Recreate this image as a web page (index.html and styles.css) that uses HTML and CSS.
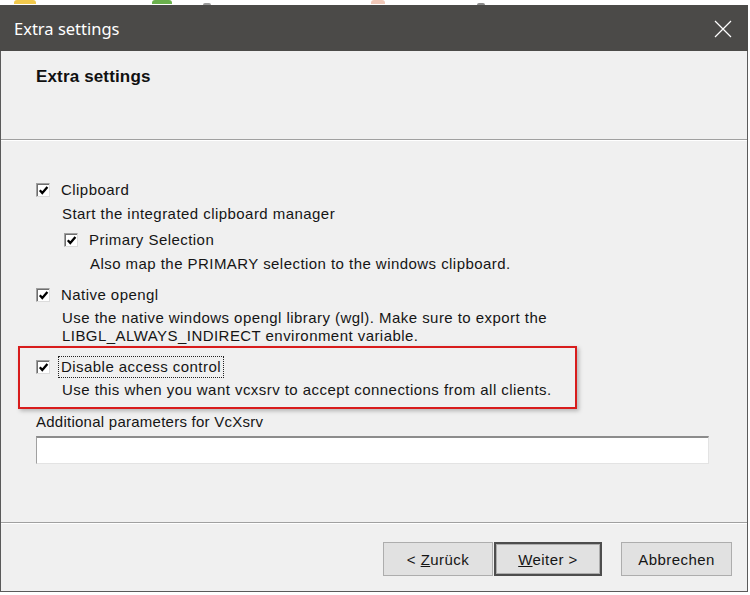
FILE: index.html
```html
<!DOCTYPE html>
<html>
<head>
<meta charset="utf-8">
<link rel="stylesheet" href="styles.css">
</head>
<body>
<div class="strip">
  <span class="blob yellow"></span>
  <span class="blob green"></span>
  <span class="blob grey1"></span>
  <span class="blob pink"></span>
  <span class="blob grey2"></span>
</div>
<div class="window">
  <div class="titlebar">
    <span class="title">Extra settings</span>
    <svg class="close" width="18" height="18" viewBox="0 0 18 18"><path d="M1 1 L17 17 M17 1 L1 17" stroke="#ffffff" stroke-width="1.2" fill="none"/></svg>
  </div>
  <div class="header">
    <div class="header-title">Extra settings</div>
  </div>
  <div class="sep"></div>
  <div class="content">
    <div class="row">
      <span class="cb"><svg width="11" height="11" viewBox="0 0 11 11"><path d="M1.8 5.2 L4.3 8 L9.4 2" stroke="#000" stroke-width="2.3" fill="none"/></svg></span>
      <span class="label">Clipboard</span>
    </div>
    <div class="desc">Start the integrated clipboard manager</div>
    <div class="row sub">
      <span class="cb"><svg width="11" height="11" viewBox="0 0 11 11"><path d="M1.8 5.2 L4.3 8 L9.4 2" stroke="#000" stroke-width="2.3" fill="none"/></svg></span>
      <span class="label">Primary Selection</span>
    </div>
    <div class="desc subdesc">Also map the PRIMARY selection to the windows clipboard.</div>
    <div class="row group">
      <span class="cb"><svg width="11" height="11" viewBox="0 0 11 11"><path d="M1.8 5.2 L4.3 8 L9.4 2" stroke="#000" stroke-width="2.3" fill="none"/></svg></span>
      <span class="label">Native opengl</span>
    </div>
    <div class="desc tight">Use the native windows opengl library (wgl). Make sure to export the<br>LIBGL_ALWAYS_INDIRECT environment variable.</div>
    <div class="row group">
      <span class="cb"><svg width="11" height="11" viewBox="0 0 11 11"><path d="M1.8 5.2 L4.3 8 L9.4 2" stroke="#000" stroke-width="2.3" fill="none"/></svg></span>
      <span class="label focus">Disable access control</span>
    </div>
    <div class="desc tight">Use this when you want vcxsrv to accept connections from all clients.</div>
    <div class="param-label">Additional parameters for VcXsrv</div>
    <div class="input"></div>
    <div class="highlight"></div>
  </div>
  <div class="sep"></div>
  <div class="footer">
    <button class="btn back">&lt; <u>Z</u>urück</button>
    <button class="btn next"><u>W</u>eiter &gt;</button>
    <button class="btn cancel">Abbrechen</button>
  </div>
</div>
</body>
</html>
```

FILE: styles.css
```css
html, body {
  margin: 0;
  padding: 0;
  background: #ffffff;
  width: 750px;
  height: 595px;
  overflow: hidden;
  font-family: "Liberation Sans", Arial, sans-serif;
}

.strip {
  height: 5px;
  display: flex;
  position: relative;
}
.blob {
  display: block;
  height: 4px;
  border-radius: 3px 3px 0 0;
}
.yellow { background: #f2c94c; width: 22px; margin-left: 14px; }
.green { background: #6ab04c; width: 20px; margin-left: 116px; }
.grey1 { background: #9a9a9a; width: 8px; margin-left: 31px; height: 2px; margin-top: 3px; }
.pink { background: #f0c8b8; width: 14px; margin-left: 160px; }
.grey2 { background: #8a8a8a; width: 8px; margin-left: 92px; height: 2px; margin-top: 3px; }

.window {
  width: 748px;
  height: 587px;
  box-sizing: border-box;
  border-left: 1px solid #5a5a5a;
  border-right: 1px solid #5a5a5a;
  border-bottom: 1px solid #5a5a5a;
  background: #f0f0f0;
  display: flex;
  flex-direction: column;
}

.titlebar {
  height: 46px;
  background: #4b4a48;
  margin: 0 -1px;
  display: flex;
  align-items: center;
  justify-content: space-between;
  padding: 0 16px 0 14px;
  flex: none;
}
.title {
  color: #ffffff;
  font-family: "Noto Sans", "Open Sans", sans-serif;
  font-size: 16.5px;
  margin-top: 1px;
}
.close {
  display: block;
  margin-top: 1px;
}

.header {
  height: 88px;
  box-sizing: border-box;
  padding: 16px 0 0 35px;
  flex: none;
}
.header-title {
  font-weight: bold;
  font-size: 17px;
  line-height: 20px;
  color: #111;
  letter-spacing: 0.15px;
}

.sep {
  height: 1px;
  background: #a0a0a0;
  border-bottom: 1px solid #ffffff;
  flex: none;
}

.content {
  height: 381px;
  box-sizing: border-box;
  padding: 40px 0 0 35px;
  position: relative;
  flex: none;
  font-size: 15px;
  letter-spacing: 0.45px;
  color: #151515;
}

.row {
  display: flex;
  align-items: center;
  height: 18px;
  line-height: 18px;
}
.row.sub {
  margin-top: 8px;
  margin-left: 28px;
}
.row.group {
  margin-top: 13px;
}
.cb {
  width: 14px;
  height: 14px;
  box-sizing: border-box;
  background: #ffffff;
  border-top: 1px solid #a0a0a0;
  border-left: 1px solid #a0a0a0;
  border-right: 1px solid #dcdcdc;
  border-bottom: 1px solid #dcdcdc;
  box-shadow: inset 1px 1px 0 #6e6e6e;
  display: flex;
  align-items: center;
  justify-content: center;
  flex: none;
  margin-right: 11px;
}
.cb svg {
  display: block;
  margin: 1px 0 0 1px;
}
.label {
  line-height: 18px;
}
.focus {
  outline: 1px dotted #222;
  outline-offset: 1px;
  padding: 0 1px;
  margin-left: -1px;
}

.desc {
  padding-left: 26px;
  margin-top: 6px;
  line-height: 18px;
}
.desc.subdesc {
  padding-left: 54px;
}
.desc.tight {
  margin-top: 5px;
}

.param-label {
  margin-top: 14px;
  line-height: 18px;
  letter-spacing: 0.25px;
}
.input {
  margin-top: 5px;
  width: 673px;
  height: 28px;
  box-sizing: border-box;
  background: #ffffff;
  border-top: 2px solid #8c8c8c;
  border-left: 1px solid #a0a0a0;
  border-right: 1px solid #e3e3e3;
  border-bottom: 1px solid #e3e3e3;
}

.highlight {
  position: absolute;
  left: 17px;
  top: 205px;
  width: 559px;
  height: 63px;
  box-sizing: border-box;
  border: 2px solid #d81c1c;
  box-shadow: 2px 2px 4px rgba(0,0,0,0.25);
  pointer-events: none;
}

.footer {
  flex: 1;
  display: flex;
  justify-content: flex-end;
  align-items: flex-start;
  padding: 18px 15px 0 0;
}
.btn {
  height: 34px;
  box-sizing: border-box;
  background: #e1e1e1;
  border: 1px solid #adadad;
  font-family: "Liberation Sans", Arial, sans-serif;
  font-size: 15px;
  letter-spacing: 0.45px;
  color: #151515;
  padding: 0;
  margin: 0;
}
.btn.back { width: 110px; }
.btn.next {
  width: 108px;
  margin-left: 1px;
  border: 2px solid #4d4d4d;
  box-shadow: inset 0 0 0 1px #adadad;
}
.btn.cancel {
  width: 111px;
  margin-left: 19px;
}
```
